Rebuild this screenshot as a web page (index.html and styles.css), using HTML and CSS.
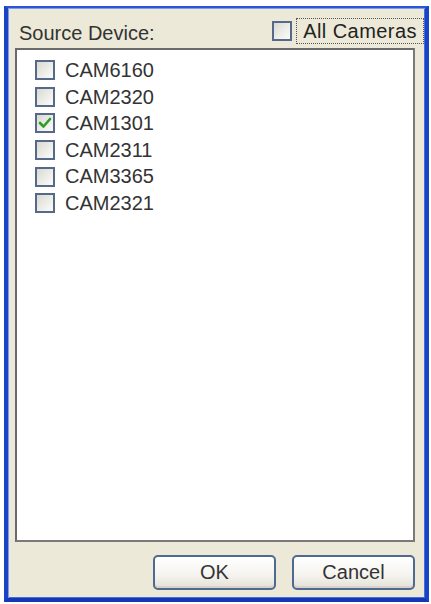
FILE: index.html
```html
<!DOCTYPE html>
<html>
<head>
<meta charset="utf-8">
<link rel="stylesheet" href="styles.css">
</head>
<body>
<div class="window">
  <div class="header">
    <span class="title">Source Device:</span>
    <label class="all">
      <span class="box"></span>
      <span class="focus">All Cameras</span>
    </label>
  </div>
  <div class="list">
    <div class="row"><span class="box"></span><span class="name">CAM6160</span></div>
    <div class="row"><span class="box"></span><span class="name">CAM2320</span></div>
    <div class="row"><span class="box checked"><svg viewBox="0 0 16 16" width="16" height="16"><polyline points="3,8 6.5,11.5 13,4" fill="none" stroke="#2a9d2a" stroke-width="2.6" stroke-linecap="round" stroke-linejoin="round"/></svg></span><span class="name">CAM1301</span></div>
    <div class="row"><span class="box"></span><span class="name">CAM2311</span></div>
    <div class="row"><span class="box"></span><span class="name">CAM3365</span></div>
    <div class="row"><span class="box"></span><span class="name">CAM2321</span></div>
  </div>
  <div class="footer">
    <button class="btn">OK</button>
    <button class="btn">Cancel</button>
  </div>
</div>
</body>
</html>
```
FILE: styles.css
```css
html, body {
  margin: 0;
  padding: 0;
  background: #ffffff;
}
body {
  font-family: "Liberation Sans", Arial, sans-serif;
  font-size: 20px;
  color: #2e2e2e;
}
.window {
  margin: 6px 0 0 4px;
  height: 590px;
  border-style: solid;
  border-width: 2px 4px 4px 4px;
  border-color: #2a56d8 #1a44c8 #1238b8 #1a44c8;
  background: #ece9d8;
  box-shadow: inset 1px 1px 0 #7e9ce8, inset -1px -1px 0 #4a6ed8;
  display: flex;
  flex-direction: column;
  padding: 0 10px 0 7px;
  box-sizing: content-box;
  width: 400px;
}
.header {
  display: flex;
  align-items: center;
  justify-content: space-between;
  padding: 13px 0 0 4px;
  height: 24px;
  margin-bottom: 3px;
  margin-right: -8px;
  line-height: 24px;
}
.title {
  color: #333;
}
.all {
  display: flex;
  align-items: center;
  gap: 5px;
}
.all .box {
  margin-top: -4px;
}
.focus {
  outline: 1px dotted #555;
  padding: 0 6px 0 6px;
  line-height: 24px;
  margin-top: -4px;
  letter-spacing: 0.45px;
  color: #222;
}
.box {
  width: 16px;
  height: 16px;
  border: 2px solid #56698a;
  background: linear-gradient(135deg, #d9d9d3 0%, #ececE7 50%, #fafaf8 100%);
  display: inline-flex;
  align-items: center;
  justify-content: center;
  flex: none;
}
.list {
  flex: 1;
  background: #ffffff;
  border: 2px solid #6a6a6a;
  border-right-color: #7a7a7a;
  border-bottom-color: #7a7a7a;
  padding: 7px 0 0 18px;
}
.row {
  display: flex;
  align-items: center;
  height: 26.6px;
  line-height: 26.6px;
}
.row .name {
  margin-left: 10px;
  color: #333;
}
.footer {
  display: flex;
  justify-content: flex-end;
  gap: 16px;
  margin-top: 13px;
  margin-bottom: 8px;
}
.btn {
  width: 123px;
  height: 35px;
  border: 2px solid #4e6a93;
  border-radius: 5px;
  background: linear-gradient(#ffffff 0%, #f4f3ee 60%, #e3e0d6 100%);
  font-family: "Liberation Sans", Arial, sans-serif;
  font-size: 20px;
  color: #333;
  padding: 0;
  box-shadow: inset 0 -2px 0 #d8d3c6;
}
```
